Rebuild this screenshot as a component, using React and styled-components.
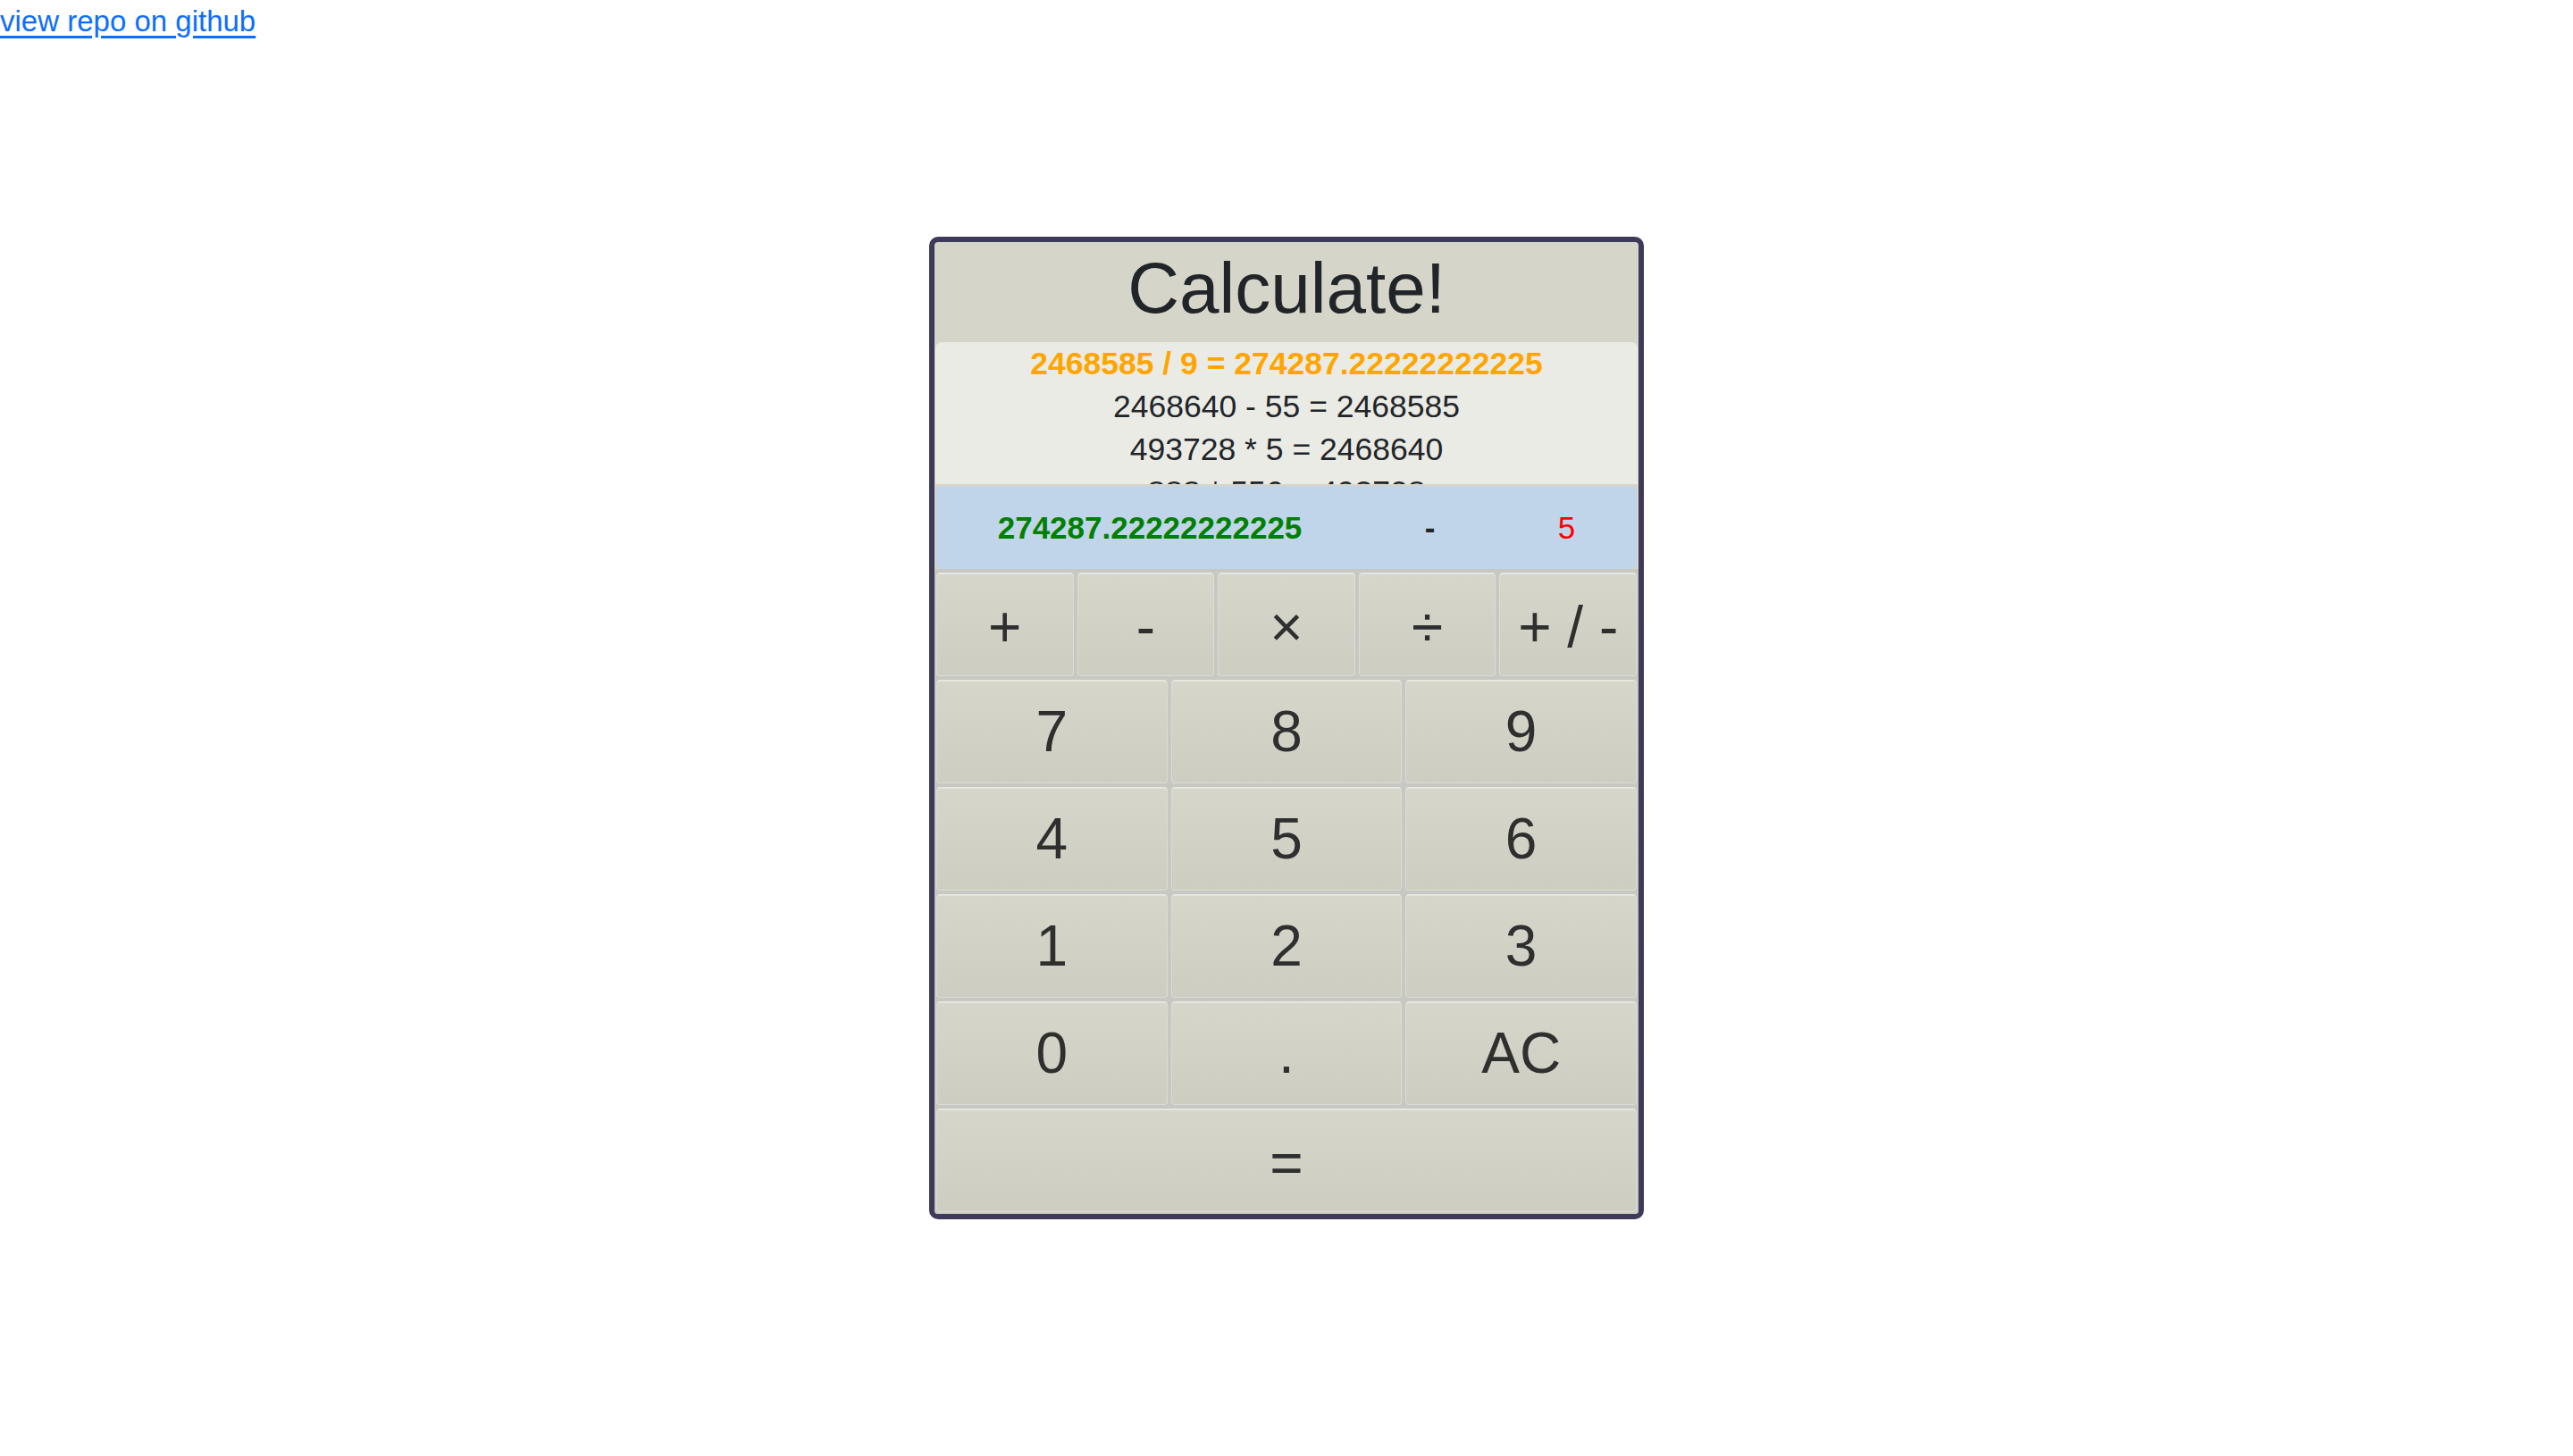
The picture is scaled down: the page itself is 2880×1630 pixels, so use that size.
import React from "react"
import styled, { createGlobalStyle } from "styled-components"

const GlobalStyle = createGlobalStyle`
  html, body {
    margin: 0;
    padding: 0;
    background: #fff;
  }
  body {
    font-family: "Liberation Sans", Arial, sans-serif;
    color: #212529;
  }
`

const RepoLink = styled.a`
  display: inline-block;
  font-size: 33px;
  line-height: 48px;
  color: #0d6efd;
  text-decoration: underline;
  text-underline-offset: 5px;
`

const Calculator = styled.div`
  box-sizing: border-box;
  width: 800px;
  margin: 217px auto 0;
  border: 6px solid #3e3a5a;
  border-radius: 10px;
  background: #d5d5c9;
  overflow: hidden;
`

const Title = styled.h1`
  margin: 0;
  height: 111px;
  padding-bottom: 8px;
  box-sizing: border-box;
  display: flex;
  align-items: center;
  justify-content: center;
  font-size: 80px;
  font-weight: 400;
  line-height: 1;
  color: #212529;
`

/* the oldest entry is clipped by the panel on purpose, as in the app */
const History = styled.div`
  margin: 1px 1px 0;
  height: 159px;
  overflow: hidden;
  background: #ebebe5;
  border-radius: 7px 7px 0 0;
  text-align: center;
  font-size: 35.5px;
  line-height: 48px;
  color: #212529;
`

const HistoryLine = styled.div`
  font-weight: ${(p) => (p.$latest ? 700 : 400)};
  color: ${(p) => (p.$latest ? "#ffa500" : "#212529")};
`

const Display = styled.div`
  margin: 2px 2px 0;
  height: 93px;
  display: flex;
  align-items: center;
  justify-content: space-around;
  background: #c0d5ea;
  border-radius: 7px;
  font-size: 35px;
  font-weight: 700;
`

const Operand = styled.span`
  color: ${(p) => p.$color};
  font-weight: ${(p) => p.$weight || 700};
`

const Keypad = styled.div`
  display: grid;
  grid-template-columns: repeat(15, 1fr);
  grid-auto-rows: 116px;
  gap: 4px;
  padding: 4px 2px 2px;
  background: #c8c8c2;
`

const Key = styled.button`
  grid-column: span ${(p) => p.$span};
  display: flex;
  align-items: center;
  justify-content: center;
  margin: 0;
  padding: ${(p) => (p.$op ? "6px 0 0" : "0")};
  border: 1px solid #dcdcd4;
  border-top-color: #e8e8e2;
  border-radius: 4px;
  background: linear-gradient(#d6d6cb, #cdcdc1);
  box-shadow: inset 0 1px 0 rgba(255, 255, 255, 0.35);
  font-family: "Liberation Sans", Arial, sans-serif;
  font-size: 64px;
  line-height: 1;
  color: #2f2f2f;
  cursor: pointer;
`

const history = [
  "2468585 / 9 = 274287.22222222225",
  "2468640 - 55 = 2468585",
  "493728 * 5 = 2468640",
  "888 * 556 = 493728",
]

const operators = ["+", "-", "×", "÷", "+ / -"]
const digits = ["7", "8", "9", "4", "5", "6", "1", "2", "3", "0", ".", "AC"]

export default function App() {
  return (
    <>
      <GlobalStyle />
      <RepoLink href="#">view repo on github</RepoLink>
      <Calculator>
        <Title>Calculate!</Title>
        <History>
          {history.map((line, i) => (
            <HistoryLine key={line} $latest={i === 0}>
              {line}
            </HistoryLine>
          ))}
        </History>
        <Display>
          <Operand $color="#008000">274287.22222222225</Operand>
          <Operand $color="#212529">-</Operand>
          <Operand $color="#ff0000" $weight={400}>
            5
          </Operand>
        </Display>
        <Keypad>
          {operators.map((op) => (
            <Key key={op} $span={3} $op>
              {op}
            </Key>
          ))}
          {digits.map((d) => (
            <Key key={d} $span={5}>
              {d}
            </Key>
          ))}
          <Key $span={15} $op>
            =
          </Key>
        </Keypad>
      </Calculator>
    </>
  )
}
